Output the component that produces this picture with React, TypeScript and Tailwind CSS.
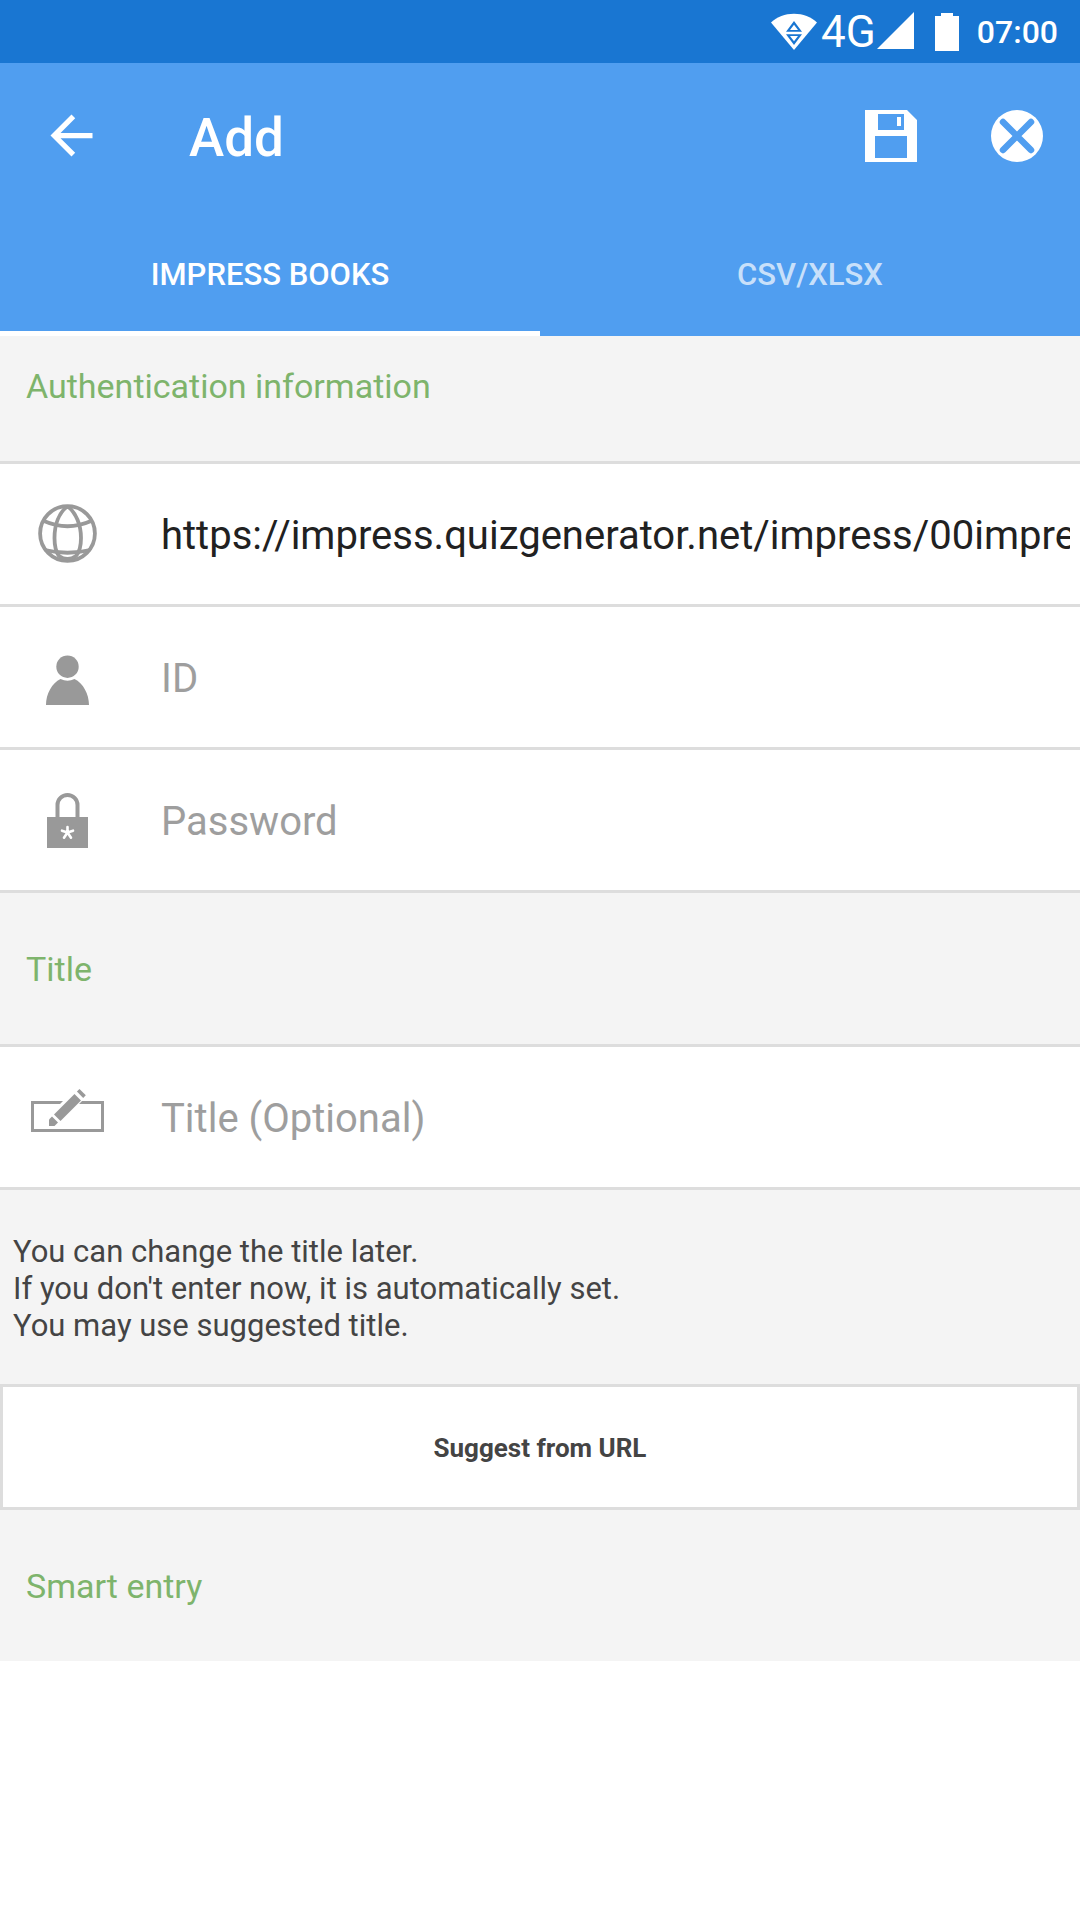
import type { ReactNode } from "react";

function WifiIcon() {
  return (
    <svg className="h-[38px] w-[46px]" viewBox="0 0 46 38" aria-hidden="true">
      <path d="M0 9.500C6 3.500 14 .7 23 .7S40 3.500 46 9.500L23 37z" fill="#fff" />
      <path d="M23 8l8 10.800H15z M15 21.200h16L23 32z" fill="#1976d2" />
      <path d="M23 11.700l4 5.300h-8z M19 23h8l-4 5.300z" fill="#fff" />
    </svg>
  );
}

function SignalIcon() {
  return (
    <svg className="h-[37px] w-[37px]" viewBox="0 0 37 37" fill="#fff" aria-hidden="true">
      <path d="M37 0v37H0z" />
    </svg>
  );
}

function BatteryIcon() {
  return (
    <svg className="h-[38px] w-[24px]" viewBox="0 0 24 38" fill="#fff" aria-hidden="true">
      <path d="M6 0h12v3h6v35H0V3h6z" />
    </svg>
  );
}

function BackIcon() {
  return (
    <svg className="h-[63px] w-[63px]" viewBox="0 0 24 24" fill="#fff" aria-hidden="true">
      <path d="M20 11H7.830l5.590-5.590L12 4l-8 8 8 8 1.410-1.410L7.830 13H20z" />
    </svg>
  );
}

function SaveIcon() {
  return (
    <svg className="h-[52px] w-[52px]" viewBox="0 0 52 52" fill="#fff" aria-hidden="true">
      <path fillRule="evenodd" d="M0 0h42l10 10v42H0z M13 4v16h26V4z M10 26v22h32V26z" />
      <path d="M32 7h4v9h-4z" />
    </svg>
  );
}

function CloseIcon() {
  return (
    <svg className="h-[52px] w-[52px]" viewBox="0 0 52 52" aria-hidden="true">
      <circle cx="26" cy="26" r="26" fill="#fff" />
      <path d="M12 12l28 28M40 12L12 40" stroke="#509ef0" strokeWidth="6.500" strokeLinecap="round" />
    </svg>
  );
}

function GlobeIcon() {
  return (
    <svg className="h-[76px] w-[75px]" viewBox="0 0 75 76" fill="none" stroke="#999" strokeWidth="3.800" aria-hidden="true">
      <circle cx="37.500" cy="37.500" r="27.400" />
      <path d="M37 10.500C29 17 24.500 29 24.500 42C24.500 50 26 56 29 60Q37.500 66 46 60C49.500 56 51 50 51 42C51 29 46 17 38 10.500" />
      <path d="M14 25Q37.500 35.500 61 25" />
      <path d="M15 54Q37.500 59.500 60 54" />
    </svg>
  );
}

function PersonIcon() {
  return (
    <svg className="h-[76px] w-[75px]" viewBox="0 0 75 76" fill="#999" aria-hidden="true">
      <circle cx="37.500" cy="27.700" r="11.200" />
      <path d="M16 66C16 55 22 44 30.500 40Q37.500 43.500 44.500 40C53 44 59 55 59 66z" />
    </svg>
  );
}

function LockIcon() {
  return (
    <svg className="h-[76px] w-[75px]" viewBox="0 0 75 76" fill="none" aria-hidden="true">
      <path d="M27.500 36V23a10 10 0 0 1 20 0V36" stroke="#999" strokeWidth="4" />
      <path d="M17 35h41v31H17z" fill="#999" />
      <path
        d="M37.500 50.500V45M37.500 50.500l-5.500-1.800M37.500 50.500l5.500-1.800M37.500 50.500l-3.500 5.200M37.500 50.500l3.500 5.200"
        stroke="#fff"
        strokeWidth="2.600"
        strokeLinecap="round"
      />
    </svg>
  );
}

function EditBoxIcon() {
  return (
    <svg className="h-[76px] w-[75px]" viewBox="0 0 75 76" fill="#999" aria-hidden="true">
      <path d="M33 22L30 25H4v25h67V25H49l3-3h22v31H1V22z" />
      <path d="M44.500 15l6.500 6.500-20.500 20.500-6.500-6.500z" />
      <path d="M49.500 10l6.300 6.300-2.600 2.600-6.300-6.300z" />
      <path d="M22 37.500l6 6-3.500 3.500H19v-6.500z" />
    </svg>
  );
}

function SectionTitle({ children, first = false }: { children: ReactNode; first?: boolean }) {
  return (
    <h2 className={`px-[26px] pb-[55px] text-[34px] leading-[40px] text-[#7eb46c] ${first ? "pt-[30px]" : "pt-[56px]"}`}>
      {children}
    </h2>
  );
}

type FieldProps = {
  id: string;
  label: string;
  icon: ReactNode;
  type?: string;
  value?: string;
  placeholder?: string;
};

function Field({ id, label, icon, type = "text", value, placeholder }: FieldProps) {
  return (
    <div className="flex items-center border-b-3 border-[#ddd] bg-white py-8 pr-[10px] pl-[30px]">
      <label htmlFor={id} aria-label={label} className="shrink-0">
        {icon}
      </label>
      <input
        id={id}
        type={type}
        defaultValue={value}
        placeholder={placeholder}
        className="ml-14 h-[60px] min-w-0 flex-1 bg-transparent pt-[3px] text-[40px] text-[#212121] outline-none placeholder:text-[#9e9e9e]"
      />
    </div>
  );
}

export default function App() {
  return (
    <div className="min-h-screen bg-white font-['Roboto',sans-serif]">
      <div className="flex h-[63px] items-center justify-end bg-[#1976d2] pr-[22px] text-white">
        <WifiIcon />
        <span className="ml-1 text-[44px] leading-none">4G</span>
        <span className="ml-px pb-[2px]">
          <SignalIcon />
        </span>
        <span className="ml-[21px]">
          <BatteryIcon />
        </span>
        <span className="ml-[18px] text-[32px] leading-none font-medium">07:00</span>
      </div>

      <header className="bg-[#509ef0] text-white">
        <div className="flex h-[147px] items-center pr-[37px] pb-[2px] pl-10">
          <button type="button" aria-label="Back">
            <BackIcon />
          </button>
          <h1 className="ml-[86px] flex-1 pt-[6px] text-[53px] font-medium">Add</h1>
          <button type="button" aria-label="Save">
            <SaveIcon />
          </button>
          <button type="button" aria-label="Close" className="ml-[74px]">
            <CloseIcon />
          </button>
        </div>
        <div role="tablist" className="grid grid-cols-2 text-[31px] font-medium">
          <button type="button" role="tab" aria-selected="true" className="h-[126px] border-b-5 border-white pt-[9px]">
            IMPRESS BOOKS
          </button>
          <button type="button" role="tab" aria-selected="false" className="h-[126px] pt-1 text-white/70">
            CSV/XLSX
          </button>
        </div>
      </header>

      <main className="bg-[#f4f4f4]">
        <SectionTitle first>Authentication information</SectionTitle>
        <div className="border-t-3 border-[#ddd]">
          <Field
            id="url"
            label="URL"
            icon={<GlobeIcon />}
            value="https://impress.quizgenerator.net/impress/00impress/"
          />
          <Field id="user" label="User ID" icon={<PersonIcon />} placeholder="ID" />
          <Field id="password" label="Password" icon={<LockIcon />} type="password" placeholder="Password" />
        </div>

        <SectionTitle>Title</SectionTitle>
        <div className="border-t-3 border-[#ddd]">
          <Field id="title" label="Title" icon={<EditBoxIcon />} placeholder="Title (Optional)" />
        </div>

        <p className="px-[13px] pt-[43px] pb-[40px] text-[31px] leading-[37px] text-[#444]">
          You can change the title later.
          <br />
          If you don't enter now, it is automatically set.
          <br />
          You may use suggested title.
        </p>
        <button
          type="button"
          className="h-[126px] w-full border-3 border-[#ddd] bg-white pt-[2px] text-[26px] font-bold text-[#444]"
        >
          Suggest from URL
        </button>
        <SectionTitle>Smart entry</SectionTitle>
      </main>
    </div>
  );
}
